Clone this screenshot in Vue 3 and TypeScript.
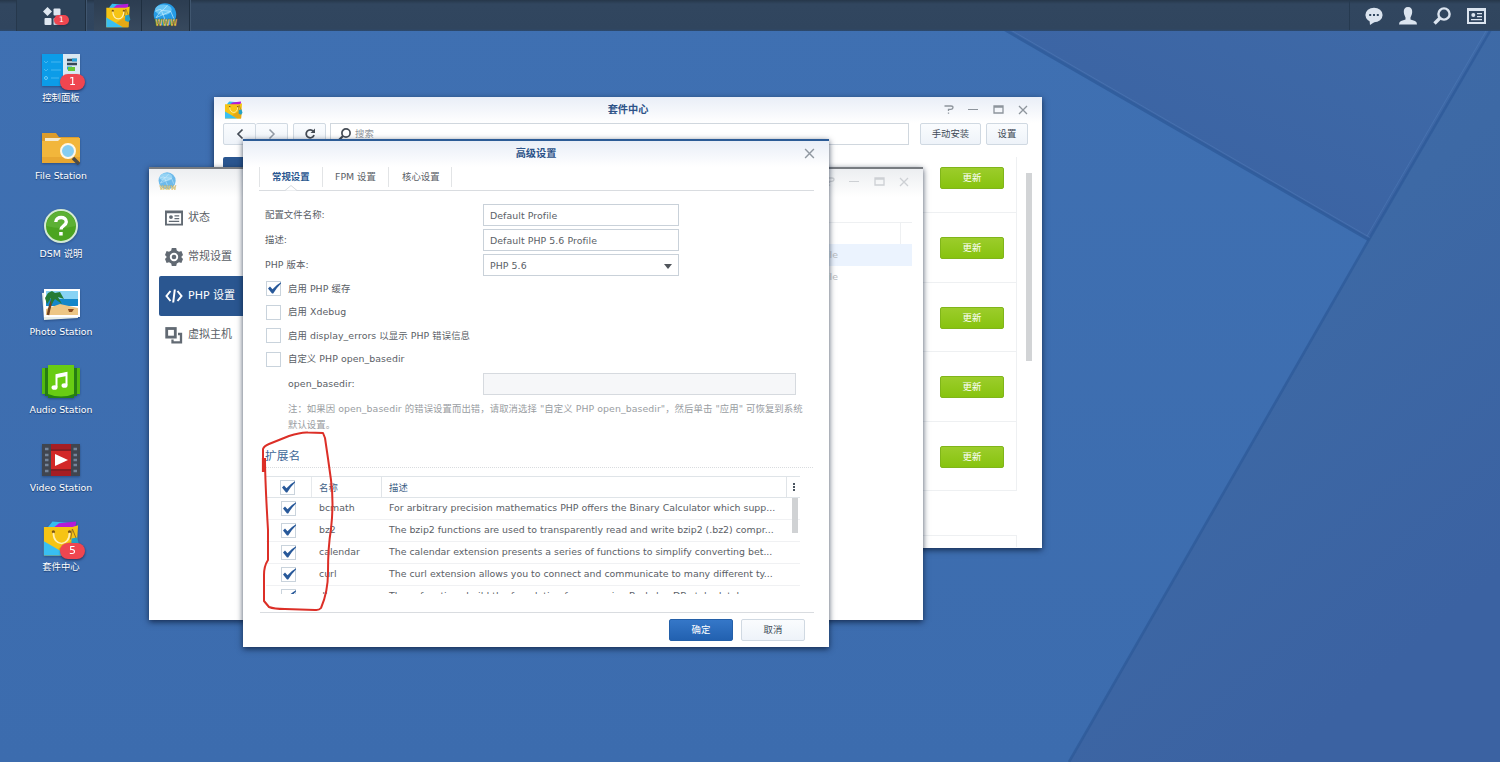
<script setup lang="ts">
interface Shortcut { id: string; label: string; badge?: number }
interface Extension { name: string; desc: string }

const shortcuts: Shortcut[] = [
  { id: 'panel', label: '控制面板', badge: 1 },
  { id: 'file', label: 'File Station' },
  { id: 'help', label: 'DSM 说明' },
  { id: 'photo', label: 'Photo Station' },
  { id: 'audio', label: 'Audio Station' },
  { id: 'video', label: 'Video Station' },
  { id: 'package', label: '套件中心', badge: 5 },
]

const checks = [
  { label: '启用 PHP 缓存', on: true },
  { label: '启用 Xdebug', on: false },
  { label: '启用 display_errors 以显示 PHP 错误信息', on: false },
  { label: '自定义 PHP open_basedir', on: false },
]

const extensions: Extension[] = [
  { name: 'bcmath', desc: 'For arbitrary precision mathematics PHP offers the Binary Calculator which supp...' },
  { name: 'bz2', desc: 'The bzip2 functions are used to transparently read and write bzip2 (.bz2) compr...' },
  { name: 'calendar', desc: 'The calendar extension presents a series of functions to simplify converting bet...' },
  { name: 'curl', desc: 'The curl extension allows you to connect and communicate to many different ty...' },
  { name: 'dba', desc: 'These functions build the foundation for accessing Berkeley DB-style databases.' },
]
</script>

<template>
  <div class="desktop">
    <svg class="wallpaper" viewBox="0 0 1500 762">
      <defs>
        <linearGradient id="facetTop" x1="0" y1="1" x2="1" y2="0">
          <stop offset="0.3" stop-color="#3b63a3" /><stop offset="1" stop-color="#3f6ba8" />
        </linearGradient>
        <linearGradient id="facetRight" x1="0" y1="0" x2="0.5" y2="1">
          <stop offset="0" stop-color="#3f6cac" /><stop offset="0.5" stop-color="#3d69a5" /><stop offset="1" stop-color="#3b62a2" />
        </linearGradient>
        <linearGradient id="base" x1="0" y1="0" x2="0" y2="1">
          <stop offset="0" stop-color="#3f70b2" /><stop offset="1" stop-color="#3c6cae" />
        </linearGradient>
        <symbol id="i-bag" viewBox="0 0 40 38">
          <path d="M7 6 11 1 34 3 34 9H6Z" fill="#35bdf0" />
          <path d="M13 7 18 3 36 1 35 9H12Z" fill="#b51bd8" />
          <path d="M2 7H32L38 5 36 37H2Z" fill="#f6c414" />
          <path d="M2 22 28 37H2Z" fill="#39bff2" />
          <path d="M28 37 17 30 33 20 37 24 36 37Z" fill="#e5a815" />
          <circle cx="12" cy="12" r="1.700" fill="#7b5413" /><circle cx="29" cy="12" r="1.700" fill="#7b5413" />
          <path d="M12 13C12 28 29 28 29 13" fill="none" stroke="#fff0b5" stroke-width="1.800" />
          <path d="M32 9 30 20M32 9 36 19" stroke="#936c20" stroke-width="1" />
          <path d="M31 19 37 18 39 25 36 29 31 27Z" fill="#24a1c6" />
        </symbol>
        <symbol id="i-globe" viewBox="0 0 24 24">
          <circle cx="11.500" cy="11" r="10.800" fill="#259be5" />
          <ellipse cx="10" cy="6.500" rx="8" ry="5" fill="#65c4f5" />
          <path d="M3 14 8 7 17 8 20 15M8 7 12 17M3 14 17 8M2 8Q8 5 8 7T14 2" fill="none" stroke="#c9efff" stroke-width=".6" />
          <text x="12.500" y="22.500" text-anchor="middle" class="www" textLength="21" lengthAdjust="spacingAndGlyphs">WWW</text>
        </symbol>
        <symbol id="i-check" viewBox="0 0 15 15">
          <path d="M2 7.500 4 5.500 6.500 8.200Q10 4 15 1.200L15 2.500Q10.500 6.800 7.200 12.600L6 12.600Z" fill="#28599a" />
        </symbol>
        <symbol id="i-card" viewBox="0 0 19 16">
          <path fill-rule="evenodd" d="M0 0H19V16H0ZM2 3V14H17V3Z" />
          <circle cx="6.300" cy="7" r="2" /><path d="M10 5H15V6.300H10ZM10 8H15V9.300H10ZM4 11H15V12.200H4Z" />
        </symbol>
        <symbol id="i-win" viewBox="0 0 11 9">
          <path d="M1 1H10V8H1ZM1 2H10" fill="none" stroke="currentColor" stroke-width="1.300" />
        </symbol>
        <symbol id="i-x" viewBox="0 0 10 10">
          <path d="M1 1 9 9M9 1 1 9" fill="none" stroke="currentColor" stroke-width="1.300" />
        </symbol>
        <symbol id="i-help" viewBox="0 0 10 9">
          <path d="M.5 1H7Q9 1 9 2.600T7 4.300H4.500V6M4.500 7.400V8.800" fill="none" stroke="currentColor" stroke-width="1.300" />
        </symbol>
      </defs>
      <rect width="1500" height="762" fill="url(#base)" />
      <path d="M956 0H1500V16L1369.500 240Z" fill="url(#facetTop)" />
      <path d="M1500 14V762H1069L1369.500 240Z" fill="url(#facetRight)" />
      <path d="M955 1 1369 240" stroke="#2d5998" stroke-width="3" opacity=".75" />
      <path d="M1508 0 1369.500 238.500 1069 762" fill="none" stroke="#2d5998" stroke-width="2.600" opacity=".75" />
      <path d="M957 -1 1370 237.500M1367 236 1504 0" fill="none" stroke="#5a88c4" stroke-width="1" opacity=".35" />
    </svg>

    <header class="taskbar">
      <div class="edge"></div>
      <div class="task menu">
        <svg width="19" height="19" viewBox="0 0 19 19" fill="#dfe7f1"><path d="M4.500 0 9 4.500 4.500 9 0 4.500Z" /><rect x="10.500" y="1.500" width="7" height="7" rx="1" /><rect x="1.500" y="11" width="7" height="7" rx="1" /><rect x="10.500" y="11" width="7" height="7" rx="1" /></svg>
        <span class="badge small">1</span>
      </div>
      <div class="gap"></div>
      <div class="task app"><svg width="26" height="25"><use href="#i-bag" /></svg></div>
      <div class="task app"><svg width="25" height="25"><use href="#i-globe" /></svg></div>
      <div class="tray">
        <svg width="18" height="18" viewBox="0 0 18 18"><ellipse cx="9" cy="8" rx="8.600" ry="7.300" /><path d="M4.500 13 5 18 11 14Z" /><path d="M4.200 7H6.200V9H4.200ZM8 7H10V9H8ZM11.800 7H13.800V9H11.800Z" fill="#30465f" /></svg>
        <svg width="18" height="18" viewBox="0 0 18 18"><path d="M9 0C12 0 13.400 2 13.200 5C13 8 12 9 11.500 10.500V12.500L16 14Q18 14.800 18 17.500H0Q0 14.800 2 14L6.500 12.500V10.500C6 9 5 8 4.800 5C4.600 2 6 0 9 0Z" /></svg>
        <svg width="18" height="18" viewBox="0 0 18 18"><circle cx="11" cy="7" r="5.600" fill="none" stroke="#dbe4ef" stroke-width="2.400" /><path d="M7 11 1.500 16.500" stroke="#dbe4ef" stroke-width="3.400" /></svg>
        <svg width="19" height="16"><use href="#i-card" /></svg>
      </div>
    </header>

    <nav class="shortcuts">
      <div v-for="s in shortcuts" :key="s.id" class="shortcut">
        <div class="art">
          <svg v-if="s.id === 'panel'" width="40" height="34" viewBox="0 0 40 34">
            <rect x="1" y="1" width="22" height="32" fill="#0c9ce8" /><rect x="22" y="1" width="17" height="32" fill="#d9e8f2" />
            <path d="M3 8 5 10 7 8M10 9H20M3 16 5 18 7 16M10 17H20M10 25H18" stroke="#45b6f0" fill="none" /><circle cx="5" cy="25" r="1.500" fill="none" stroke="#70cbf7" />
            <path d="M26 7H36M26 11H36" stroke="#354858" stroke-width="2.500" /><path d="M31 7H36M26 15H31" stroke="#26a4dc" stroke-width="3" /><rect x="27" y="14" width="7" height="4" fill="#66c735" />
          </svg>
          <svg v-else-if="s.id === 'file'" width="40" height="34" viewBox="0 0 40 34">
            <path d="M1 2H15L18 6H38V15H1Z" fill="#dc9c2b" /><rect x="4" y="7" width="33" height="5" fill="#f5ead0" /><path d="M1 10H17L20 7H39V32H1Z" fill="#f2b63b" /><path d="M1 26H39V32H1Z" fill="#e8a731" />
            <path d="M32 27 38 33" stroke="#4d4c48" stroke-width="3.500" /><circle cx="27" cy="20" r="7" fill="#86cdf2" stroke="#fff7e6" stroke-width="2" />
          </svg>
          <svg v-else-if="s.id === 'help'" width="36" height="36" viewBox="0 0 36 36">
            <circle cx="18" cy="18" r="16" fill="#4ba420" stroke="#d4ead4" stroke-width="2" /><path d="M3.500 18A14.500 14.500 0 0 1 32.500 18Q18 22 3.500 18" fill="#5cb034" />
            <path d="M12.800 14C12.800 8 23.500 8 23.300 14C23.200 17.500 18 18 18 21.500" fill="none" stroke="#fff" stroke-width="3.400" /><rect x="16.200" y="24" width="3.500" height="3.500" fill="#fff" />
          </svg>
          <svg v-else-if="s.id === 'photo'" width="40" height="34" viewBox="0 0 40 34">
            <path d="M1 6 35 3 37 31 3 33Z" fill="#e8eee8" /><path d="M3 2 39 2 39 30 3 30Z" fill="#fff" /><rect x="5" y="4" width="32" height="12" fill="#88d3f4" /><rect x="5" y="12" width="32" height="7" fill="#1487c9" /><path d="M5 22 19 17 37 21V28H5Z" fill="#edc684" />
            <path d="M7 28Q9 16 13 10" fill="none" stroke="#704423" stroke-width="2.500" /><path d="M4 11 7 6 11 4 14 6 19 5 23 12 17 10 21 17 14 12 10 18 10 11 6 17Z" fill="#267b35" /><path d="M27 22H33L31 25H28Z" fill="#8d4d20" />
          </svg>
          <svg v-else-if="s.id === 'audio'" width="40" height="34" viewBox="0 0 40 34">
            <rect x="1" y="3" width="38" height="26" fill="#52b811" /><path d="M4 3H7V31H4ZM33 3H36V31H33Z" fill="#277c12" /><rect x="7" y="0" width="26" height="33" fill="#68cc13" /><path d="M7 29Q20 34 33 29V33H7Z" fill="#248211" />
            <path d="M15.500 22V10L25.500 8V20" fill="none" stroke="#fff" stroke-width="2" /><path d="M15.500 9.500 25.500 7.500V11L15.500 13Z" fill="#fff" /><ellipse cx="13.500" cy="22.500" rx="3" ry="2.300" fill="#fff" /><ellipse cx="23.500" cy="20.500" rx="3" ry="2.300" fill="#fff" />
          </svg>
          <svg v-else-if="s.id === 'video'" width="40" height="34" viewBox="0 0 40 34">
            <rect x="1" y="1" width="38" height="32" fill="#40454f" /><rect x="10" y="1" width="20" height="32" fill="#a51d23" /><rect x="10" y="8" width="20" height="18" fill="#d22727" /><path d="M10 7H30M10 27H30" stroke="#651f25" />
            <path d="M4 6H7.500M4 12H7.500M4 17H7.500M4 22H7.500M4 28H7.500M32.500 6H36M32.500 12H36M32.500 17H36M32.500 22H36M32.500 28H36" stroke="#73849a" stroke-width="2.600" /><path d="M14 11 27 17 14 23Z" fill="#fff" />
          </svg>
          <svg v-else width="38" height="37"><use href="#i-bag" /></svg>
          <span v-if="s.badge" class="badge">{{ s.badge }}</span>
        </div>
        <span class="name">{{ s.label }}</span>
      </div>
    </nav>

    <section class="window packages">
      <div class="titlebar">
        <svg class="app-icon" width="19" height="18"><use href="#i-bag" /></svg>
        <strong>套件中心</strong>
        <div class="controls">
          <svg width="10" height="9"><use href="#i-help" /></svg><i class="min"></i><svg width="11" height="9"><use href="#i-win" /></svg><svg width="10" height="10"><use href="#i-x" /></svg>
        </div>
      </div>
      <div class="toolbar">
        <div class="pair">
          <button><svg width="8" height="12" viewBox="0 0 8 12"><path d="M6.500 1.500 2 6 6.500 10.500" fill="none" stroke="#444c56" stroke-width="1.700" /></svg></button>
          <button><svg width="8" height="12" viewBox="0 0 8 12"><path d="M1.500 1.500 6 6 1.500 10.500" fill="none" stroke="#939ba5" stroke-width="1.500" /></svg></button>
        </div>
        <button class="refresh"><svg width="12" height="12" viewBox="0 0 12 12"><path d="M9.300 3.300A4 4 0 1 0 10 7" fill="none" stroke="#454c55" stroke-width="1.800" /><path d="M11 .5V5H6.500Z" fill="#454c55" /></svg></button>
        <div class="search"><svg width="13" height="13" viewBox="0 0 13 13"><circle cx="8" cy="5" r="4.100" fill="none" stroke="#454c55" stroke-width="1.700" /><path d="M5 8 1 12" stroke="#454c55" stroke-width="2.300" /></svg><span>搜索</span></div>
        <button class="manual">手动安装</button>
        <button class="settings">设置</button>
      </div>
      <div class="pkg-body">
        <div class="pkg-nav"></div>
        <div class="pkg-list">
          <div v-for="n in 5" :key="n" class="pkg"><button>更新</button></div>
          <div class="pkg-next"></div>
        </div>
        <div class="scroll"></div>
      </div>
    </section>

    <section class="window web">
      <div class="titlebar">
        <svg class="app-icon" width="19" height="19"><use href="#i-globe" /></svg>
        <div class="controls">
          <svg width="10" height="9"><use href="#i-help" /></svg><i class="min"></i><svg width="11" height="9"><use href="#i-win" /></svg><svg width="10" height="10"><use href="#i-x" /></svg>
        </div>
      </div>
      <div class="web-body">
        <aside>
          <div class="item"><svg width="18" height="16"><use href="#i-card" /></svg>状态</div>
          <div class="item"><svg width="18" height="18" viewBox="0 0 18 18"><path fill-rule="evenodd" d="M6.800 0H11.200L11.800 2.600 14 3.800 16.400 3 18 7 16.200 9 18 11 16.400 15 14 14.200 11.800 15.400 11.200 18H6.800L6.200 15.400 4 14.200 1.600 15 0 11 1.800 9 0 7 1.600 3 4 3.800 6.200 2.600ZM9 4.800A4.200 4.200 0 1 0 9 13.200 4.200 4.200 0 1 0 9 4.800Z" /><circle cx="9" cy="9" r="2.300" /></svg>常规设置</div>
          <div class="item active"><svg width="18" height="14" viewBox="0 0 18 14" fill="none" stroke="#fff" stroke-width="2"><path d="M5.500 2 1.500 7 5.500 12M12.500 2 16.500 7 12.500 12M9.800 .5 8.200 13.500" /></svg>PHP 设置</div>
          <div class="item"><svg width="18" height="17" viewBox="0 0 18 17" fill="none" stroke="#626a73" stroke-width="2.800"><rect x="1.700" y="1.500" width="8.600" height="8.600" /><path d="M13 7H16V15.300H7.500V12.500" stroke-width="2.300" /></svg>虚拟主机</div>
        </aside>
        <div class="web-table">
          <div class="web-head"><i></i></div>
          <div class="web-row hot">Default Profile</div>
          <div class="web-row">Default Profile</div>
        </div>
      </div>
    </section>

    <section class="window dialog">
      <div class="titlebar"><strong>高级设置</strong><svg class="close" width="11" height="11"><use href="#i-x" /></svg></div>
      <div class="tabs">
        <div class="tab on">常规设置<svg width="12" height="6" viewBox="0 0 12 6"><path d="M0 5.500 6 .5 12 5.500" fill="#fff" stroke="#d5d9dd" /></svg></div>
        <div class="tab fpm">FPM 设置</div>
        <div class="tab">核心设置</div>
      </div>
      <div class="form">
        <div class="field"><label>配置文件名称:</label><div class="input">Default Profile</div></div>
        <div class="field"><label>描述:</label><div class="input">Default PHP 5.6 Profile</div></div>
        <div class="field"><label>PHP 版本:</label><div class="input">PHP 5.6<i class="caret"></i></div></div>
        <div class="checks">
          <div v-for="c in checks" :key="c.label" class="check-row">
            <span class="box"><svg v-if="c.on" width="15" height="15"><use href="#i-check" /></svg></span>{{ c.label }}
          </div>
        </div>
        <div class="field base"><label>open_basedir:</label><div class="input disabled"></div></div>
        <p class="note">注：如果因 open_basedir 的错误设置而出错，请取消选择 "自定义 PHP open_basedir"，然后单击 "应用" 可恢复到系统<br>默认设置。</p>
        <h3>扩展名</h3>
      </div>
      <div class="grid">
        <div class="grid-head">
          <div class="c1"><span class="box"><svg width="15" height="15"><use href="#i-check" /></svg></span></div>
          <div class="c2">名称</div><div class="c3">描述</div><div class="c4"><i></i><i></i><i></i></div>
        </div>
        <div class="grid-body">
          <div class="rows">
            <div v-for="e in extensions" :key="e.name" class="row">
              <div class="c1"><span class="box"><svg width="15" height="15"><use href="#i-check" /></svg></span></div>
              <div class="c2">{{ e.name }}</div><div class="c3">{{ e.desc }}</div>
            </div>
          </div>
          <div class="thumb"></div>
        </div>
      </div>
      <footer><button class="ok">确定</button><button>取消</button></footer>
    </section>

    <svg class="marker" width="90" height="190" viewBox="255 425 90 190">
      <path d="M263 471V449Q264 446 269 444L289 436Q301 432 308 432.500L323 433L325 438Q328 458 331 480Q334 503 331 529Q328 547 328 572Q328 592 321 608Q319 610.500 315 610L285 609Q274 609 269 607L264 601V575Q264 566 268 560V530Q265 480 265 458" fill="none" stroke="#dc2f27" stroke-width="2" stroke-linejoin="round" />
      <path d="M263.500 458V472" stroke="#dc2f27" stroke-width="3.200" />
    </svg>
  </div>
</template>

<style>
body { margin: 0; overflow: hidden; }
</style>

<style scoped>
* { box-sizing: border-box; }
.desktop { position: relative; width: 1500px; height: 762px; overflow: hidden; background: #3e6eb0; font: 9.4px/14px "DejaVu Sans", "Noto Sans CJK SC", sans-serif; color: #5a6066; }
button { padding: 0; font: inherit; color: #414b57; border: 1px solid #d0d9e2; border-radius: 2px; background: linear-gradient(#fafcfe, #eef3f9); display: flex; align-items: center; justify-content: center; }
.wallpaper { position: absolute; inset: 0; width: 1500px; height: 762px; }
.www { font: bold 8px "DejaVu Sans", sans-serif; fill: #f5d04a; stroke: #6b5a20; stroke-width: .3px; }
.taskbar { position: relative; display: flex; height: 31px; background: linear-gradient(#26374a, #31465f 4px, #30455e 29px, #2b4a70); }
.edge { width: 17px; border-right: 1px solid #26384c; }
.task { position: relative; display: flex; align-items: center; justify-content: center; background: #2b3e53; border-right: 1px solid #1f2f40; box-shadow: 1px 0 #40566f; }
.menu { width: 69px; background: #2d4259; }
.menu svg { margin: 1px 0 0 2px; }
.gap { width: 8px; }
.app { width: 48px; background: linear-gradient(#2c3d51, #37495e); }
.tray { margin-left: auto; width: 151px; padding: 1px 14px 0 15px; border-left: 1px solid #263a50; display: flex; align-items: center; justify-content: space-between; fill: #dbe4ef; height: 30px; }
.badge { position: absolute; right: -4px; bottom: -4px; width: 25px; height: 16px; border-radius: 8px; background: #ef4650; color: #fff; text-align: center; font-size: 11px; line-height: 16px; box-shadow: 0 1px 2px rgba(40,20,50,.4); }
.badge.small { right: 16px; bottom: 6px; width: 15px; height: 10px; font-size: 7.500px; line-height: 10px; }
.shortcuts { position: absolute; left: 11px; top: 49px; width: 100px; }
.shortcut { height: 78.100px; display: flex; flex-direction: column; align-items: center; }
.art { position: relative; width: 40px; height: 42px; display: flex; align-items: center; justify-content: center; filter: drop-shadow(0 1px 1px rgba(10,30,70,.4)); }
.art .badge { bottom: 1px; }
.name { color: #fff; text-shadow: 0 1px 1px rgba(10,35,80,.7); white-space: nowrap; }
.window { position: absolute; background: #fff; box-shadow: 0 2px 6px rgba(8,22,48,.75); }
.titlebar { position: relative; flex: none; background: linear-gradient(#e9eef7, #fff); display: flex; justify-content: center; color: #2c5288; font-size: 10.200px; }
.app-icon { position: absolute; left: 10px; top: 4px; }
.controls { position: absolute; right: 14px; top: 7px; display: flex; align-items: center; gap: 14.500px; color: #8d949c; height: 11px; }
.min { width: 10px; height: 1.500px; background: currentColor; }
.packages { left: 214px; top: 97px; width: 828px; height: 451px; display: flex; flex-direction: column; }
.packages .titlebar { height: 26px; padding-top: 6px; }
.toolbar { display: flex; height: 22px; padding: 0 14px 0 9px; }
.pair { display: flex; width: 65px; margin-right: 5px; }
.pair button { flex: 1; }
.pair button + button { border-left: 0; }
.refresh { width: 33px; margin-right: 4px; }
.search { flex: 1; border: 1px solid #d0d7de; display: flex; align-items: center; padding-left: 7px; gap: 4px; color: #8f959c; margin-right: 11px; }
.manual { width: 61px; margin-right: 5px; }
.settings { width: 42px; }
.pkg-body { flex: 1; display: flex; padding: 12px 10px 0 9px; align-items: flex-start; }
.pkg-nav { width: 120px; height: 31px; background: #2a5690; border-radius: 2px; }
.pkg-list { margin-left: auto; width: 640px; margin-right: 9px; }
.pkg { height: 69.500px; border: 1px solid #eef0f2; border-top: 0; display: flex; justify-content: flex-end; padding: 24px 12px 0 0; }
.pkg:first-child { height: 56px; padding-top: 10px; }
.pkg button { width: 64px; height: 22px; color: #fff; border: 1px solid #80b51a; background: linear-gradient(#9ccd2b, #87c30f); }
.pkg-next { margin-top: 44px; height: 12px; border: 1px solid #eef0f2; border-bottom: 0; }
.scroll { width: 6px; height: 188px; margin-top: 16px; background: #d2d4d6; }
.web { left: 149px; top: 167px; width: 774px; height: 453px; border-top: 2px solid #777b80; display: flex; flex-direction: column; }
.web .titlebar { height: 28px; background: linear-gradient(#eceef1, #fff); }
.web .app-icon { opacity: .65; left: 9px; top: 3px; }
.web .controls { color: #cdd0d4; }
.web-body { display: flex; flex: 1; padding: 0 11px 0 10px; }
aside { width: 160px; padding-top: 1px; }
.item { height: 39.200px; display: flex; align-items: center; padding-left: 6px; gap: 5px; font-size: 11px; fill: #626a73; }
.item.active { background: #2a5690; color: #fff; border-radius: 2px; }
.web-table { flex: 1; padding-top: 25px; color: #b9bdc2; }
.web-head { height: 22px; border-top: 1px solid #eef0f2; display: flex; justify-content: flex-end; }
.web-head i { width: 12px; border-left: 1px solid #eef0f2; }
.web-row { height: 22px; line-height: 22px; text-align: right; padding-right: 74px; }
.web-row.hot { background: #ebf3fe; }
.dialog { left: 243px; top: 139px; width: 586px; height: 508px; border-top: 2px solid #2c5b96; display: flex; flex-direction: column; }
.dialog .titlebar { height: 26px; padding-top: 6px; }
.close { position: absolute; right: 14px; top: 7px; color: #9098a1; }
.tabs { flex: none; display: flex; margin: 0 15px 0 16px; height: 24px; border-bottom: 1px solid #d9dce0; }
.tab { position: relative; height: 20px; padding: 0 12px; line-height: 19px; border-right: 1px solid #e2e4e6; white-space: nowrap; }
.tab.on { width: 64px; border-left: 1px solid #e2e4e6; color: #28568f; font-weight: bold; padding: 0 0 0 12px; }
.tab.fpm { width: 66px; }
.tab:last-child { width: 63px; padding: 0 0 0 13px; }
.tab svg { position: absolute; left: 25px; top: 18px; }
.form { flex: none; padding: 13px 16px 0 22px; height: 278px; letter-spacing: .06px; }
.field { display: flex; height: 25px; }
.field label { width: 218px; height: 22px; line-height: 22px; }
.input { width: 196px; height: 22px; border: 1px solid #c9d1d9; padding-left: 6px; line-height: 21px; display: flex; justify-content: space-between; }
.caret { margin: 9px 6px 0 0; width: 0; height: 0; border: 4.500px solid transparent; border-top: 5px solid #50555b; border-bottom: 0; }
.checks { margin-top: -2px; }
.check-row { display: flex; align-items: center; height: 23.500px; gap: 7px; padding-left: 1px; white-space: nowrap; }
.box { flex: none; width: 15px; height: 15px; border: 1px solid #c9d3dc; background: #fff; display: flex; }
.box svg { margin: -1px; flex: none; }
.base { padding-left: 23px; margin-top: 2px; height: 27px; }
.base label { width: 195px; }
.input.disabled { width: 313px; background: #f6f7f9; border-color: #d6dadf; }
.note { margin: 1px 0 0 23px; color: #999da2; line-height: 15.600px; white-space: nowrap; }
h3 { margin: 16px 0 0 0; font-size: 11.800px; font-weight: normal; color: #3d6797; line-height: 16px; height: 20px; border-bottom: 1px dotted #d9dcdf; letter-spacing: 0; }
.grid { flex: none; margin: 0 29px 0 23px; padding-top: 7px; }
.grid-head { display: flex; height: 22px; border-top: 1px solid #dfe4e8; border-bottom: 1px solid #dfe4e8; color: #3d6085; line-height: 21px; }
.c1 { width: 46px; padding-left: 14px; display: flex; align-items: center; flex: none; }
.grid-head .c1 { border-right: 1px solid #e6e9ec; padding-left: 14px; }
.c2 { width: 70px; padding-left: 7px; flex: none; }
.grid-head .c2 { border-right: 1px solid #e0e4e8; }
.c3 { flex: 1; padding-left: 7px; white-space: nowrap; }
.c4 { width: 14px; border-left: 1px solid #e0e4e8; display: flex; flex-direction: column; align-items: center; justify-content: center; gap: 1px; }
.c4 i { width: 2px; height: 2px; background: #4b5661; }
.grid-body { display: flex; height: 96px; overflow: hidden; }
.rows { width: 534px; flex: none; }
.row { display: flex; height: 22px; border-bottom: 1px solid #f0f1f3; line-height: 20px; }
.row .c1 { padding-left: 15px; }
.row .c3 { padding-left: 7px; }
.thumb { width: 6px; height: 35px; background: #d0d2d4; margin-left: -8px; flex: none; }
footer { margin: auto 15px 0 17px; height: 35px; border-top: 1px solid #d9dce0; padding: 6px 9px 0 0; display: flex; justify-content: flex-end; gap: 8px; }
footer button { width: 64px; height: 22px; }
footer .ok { color: #fff; background: linear-gradient(#3577c8, #2261b0); border-color: #2460a9; }
.marker { position: absolute; left: 255px; top: 425px; }
</style>
